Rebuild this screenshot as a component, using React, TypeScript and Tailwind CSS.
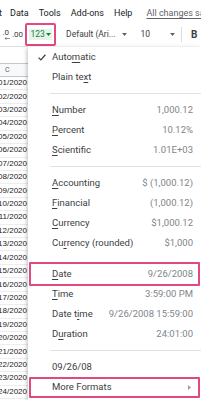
import React from "react";

const pink = "border-[#df4a7f]";

type Item =
  | { kind: "sep"; h: string; line?: boolean }
  | {
      kind: "item";
      label: React.ReactNode;
      value?: string;
      check?: boolean;
      boxed?: string;
      arrow?: boolean;
    };

const items: Item[] = [
  { kind: "item", label: <>Auto<u>m</u>atic</>, check: true },
  { kind: "item", label: <>Plain te<u>x</u>t</> },
  { kind: "sep", h: "h-[13px]", line: true },
  { kind: "item", label: <><u>N</u>umber</>, value: "1,000.12" },
  { kind: "item", label: <><u>P</u>ercent</>, value: "10.12%" },
  { kind: "item", label: <><u>S</u>cientific</>, value: "1.01E+03" },
  { kind: "sep", h: "h-[13px]", line: true },
  { kind: "item", label: <><u>A</u>ccounting</>, value: "$ (1,000.12)" },
  { kind: "item", label: <><u>F</u>inancial</>, value: "(1,000.12)" },
  { kind: "item", label: <><u>C</u>urrency</>, value: "$1,000.12" },
  { kind: "item", label: <>Cu<u>r</u>rency (rounded)</>, value: "$1,000" },
  { kind: "sep", h: "h-[11px]" },
  { kind: "item", label: <><u>D</u>ate</>, value: "9/26/2008", boxed: "-top-[2px] -bottom-[2px]" },
  { kind: "item", label: <><u>T</u>ime</>, value: "3:59:00 PM" },
  { kind: "item", label: <>Date t<u>i</u>me</>, value: "9/26/2008 15:59:00" },
  { kind: "item", label: <>D<u>u</u>ration</>, value: "24:01:00" },
  { kind: "sep", h: "h-[13px]", line: true },
  { kind: "item", label: <>09/26/08</> },
  { kind: "item", label: <>More Formats</>, arrow: true, boxed: "top-0 -bottom-[1px]" },
];

const days = Array.from({ length: 24 }, (_, i) => `01/${String(i + 1).padStart(2, "0")}/2020`);

function Caret({ className = "" }: { className?: string }) {
  return (
    <svg width="5" height="3" viewBox="0 0 5 3" className={`shrink-0 ${className}`}>
      <path d="M0 0 L5 0 L2.5 3 Z" fill="currentColor" />
    </svg>
  );
}

function MenuRow({ item }: { item: Extract<Item, { kind: "item" }> }) {
  return (
    <div className="relative flex h-[20px] items-center pr-[8px]">
      <div className="flex w-[24px] justify-end pr-[6px]">
        {item.check && (
          <svg width="8" height="7" viewBox="0 0 8 7">
            <path d="M0.6 3.6 L2.9 5.9 L7.4 0.8" fill="none" stroke="#3c4043" strokeWidth="1.3" />
          </svg>
        )}
      </div>
      <span className="flex-1 text-[#3c4043] decoration-[0.5px] underline-offset-[1.5px]">{item.label}</span>
      {item.value && <span className="text-[#80868b]">{item.value}</span>}
      {item.arrow && (
        <svg width="3" height="5" viewBox="0 0 3 5" className="mr-[2px] text-[#9aa0a6]">
          <path d="M0 0 L3 2.5 L0 5 Z" fill="currentColor" />
        </svg>
      )}
      {item.boxed && (
        <div className={`pointer-events-none absolute left-[1px] right-[1px] rounded-[1px] border-2 ${pink} ${item.boxed}`} />
      )}
    </div>
  );
}

export default function App() {
  return (
    <div className="flex h-[400px] w-[201px] flex-col overflow-hidden bg-white font-['Roboto',sans-serif]">
      {/* menu bar */}
      <div className="flex h-[23px] items-center overflow-hidden whitespace-nowrap pt-[4px] text-[9px] text-[#202124]">
        <span className="w-[3px] shrink-0 overflow-hidden">
          <span className="-ml-[1px] inline-block">t</span>
        </span>
        <span className="ml-[7px] shrink-0">Data</span>
        <span className="ml-[10px] shrink-0">Tools</span>
        <span className="ml-[10px] shrink-0">Add-ons</span>
        <span className="ml-[10px] shrink-0">Help</span>
        <span className="ml-[14px] shrink-0 text-[#5f6368] underline decoration-[0.5px] underline-offset-[1.5px]">
          All changes saved in Drive
        </span>
      </div>

      {/* toolbar */}
      <div className="flex h-[23px] items-center overflow-hidden whitespace-nowrap text-[8.5px] text-[#3c4043]">
        <div className="flex w-[10px] shrink-0 flex-col items-end pr-[1px] leading-none">
          <span className="text-[8px]">.0</span>
          <svg width="5" height="3" viewBox="0 0 5 3" className="-mr-[1px]">
            <path d="M0 1.5 H5 M0 1.5 L1.5 0.2 M0 1.5 L1.5 2.8" stroke="#5f6368" strokeWidth="0.7" fill="none" />
          </svg>
        </div>
        <span className="ml-[2px] shrink-0 text-[8px]">.00</span>
        <div className={`ml-[2px] flex h-[23px] w-[31px] shrink-0 items-center justify-center rounded-[2px] border-[2.5px] ${pink}`}>
          <div className="flex h-[11px] items-center gap-[1px] bg-[#e6f4ea] px-[1px] text-[#188038]">
            <span>123</span>
            <Caret />
          </div>
        </div>
        <span className="ml-[10px] shrink-0">Default (Ari...</span>
        <Caret className="ml-[6px] text-[#5f6368]" />
        <span className="ml-[14px] shrink-0">10</span>
        <Caret className="ml-[20px] text-[#5f6368]" />
        <div className="ml-[6px] h-[15px] w-px shrink-0 bg-[#dadce0]" />
        <span className="ml-[9px] shrink-0 text-[10px] font-bold text-[#3c4043]">B</span>
      </div>

      {/* sheet + dropdown */}
      <div className="relative flex-1">
        <div className="w-[28px]">
          <div className="h-[17px] border-t border-[#e0e0e0]" />
          <div className="flex h-[14px] items-center border-y border-[#c7c7c7] bg-[#f8f9fa] pl-[5px] text-[7px] text-[#5f6368]">
            C
          </div>
          {days.map((d) => (
            <div
              key={d}
              className="flex h-[13.43px] items-center justify-end overflow-hidden whitespace-nowrap border-b border-[#ededed] pr-[1px] font-['Liberation_Sans',sans-serif] text-[8px] text-[#222]"
            >
              {d}
            </div>
          ))}
        </div>

        <div className="absolute bottom-0 left-[28px] right-0 top-[1px] whitespace-nowrap bg-white text-[9.5px] shadow-[-1px_1px_4px_rgba(0,0,0,0.25)]">
          {items.map((it, i) =>
            it.kind === "sep" ? (
              <div key={i} className={`flex items-center pl-[22px] ${it.h}`}>
                {it.line && <div className="h-px w-full bg-[#e3e3e3]" />}
              </div>
            ) : (
              <MenuRow key={i} item={it} />
            )
          )}
        </div>
      </div>
    </div>
  );
}
